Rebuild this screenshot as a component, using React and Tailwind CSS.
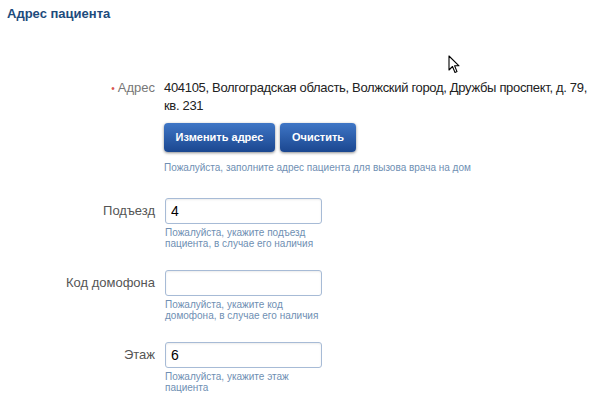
import React from 'react';

const font = { fontFamily: '"Liberation Sans", Arial, sans-serif' };

function Field({ label, value, hint }) {
  return (
    <div className="flex items-start">
      <div className="w-[155px] shrink-0 pt-[4px] text-right text-[13px] leading-[18px] text-[#555]">
        {label}
      </div>
      <div className="ml-[10px]">
        <input
          type="text"
          defaultValue={value}
          className="h-[26px] w-[157px] rounded-[3px] border border-[#a7bbd6] bg-white px-[5px] text-[14px] text-black outline-none shadow-[inset_0_1px_2px_rgba(0,0,0,0.08)]"
        />
        <div className="mt-[3px] w-[160px] text-[10px] leading-[11px] text-[#6f8fb3]">{hint}</div>
      </div>
    </div>
  );
}

export default function App() {
  return (
    <div className="relative h-[400px] w-[600px] overflow-hidden bg-white" style={font}>
      <h2 className="pl-[7px] pt-[6px] text-[13px] font-bold leading-[16px] text-[#1d4b7c]">Адрес пациента</h2>

      {/* Address */}
      <div className="mt-[57px] flex items-start">
        <div className="w-[155px] shrink-0 text-right text-[13px] leading-[18px] text-[#777]">
          <span className="mr-[3px] text-[10px] text-[#d9534f]">•</span>
          Адрес
        </div>
        <div className="ml-[9px]">
          <div className="w-[436px] text-[13px] leading-[18px] tracking-[-0.32px] text-[#222]">
            404105, Волгоградская область, Волжский город, Дружбы проспект, д. 79, кв. 231
          </div>
          <div className="mt-[8px] flex gap-[5px]">
            <button className="h-[29px] w-[111px] rounded-[4px] bg-gradient-to-b from-[#3f76c6] to-[#1b4790] text-[11px] font-bold text-white shadow-[0_1px_3px_rgba(0,0,0,0.45)]">
              Изменить адрес
            </button>
            <button className="h-[29px] w-[76px] rounded-[4px] bg-gradient-to-b from-[#3f76c6] to-[#1b4790] text-[11px] font-bold text-white shadow-[0_1px_3px_rgba(0,0,0,0.45)]">
              Очистить
            </button>
          </div>
          <div className="mt-[10px] text-[10px] leading-[12px] text-[#6f8fb3]">
            Пожалуйста, заполните адрес пациента для вызова врача на дом
          </div>
        </div>
      </div>

      <div className="mt-[24px] flex flex-col gap-[21px]">
        <Field label="Подъезд" value="4" hint="Пожалуйста, укажите подъезд пациента, в случае его наличия" />
        <Field label="Код домофона" value="" hint="Пожалуйста, укажите код домофона, в случае его наличия" />
        <Field label="Этаж" value="6" hint="Пожалуйста, укажите этаж пациента" />
      </div>

      {/* mouse cursor */}
      <svg className="absolute left-[448px] top-[55px]" width="12" height="19" viewBox="0 0 12 19">
        <path d="M1 1 L1 15 L4.5 11.5 L7 17.5 L9 16.6 L6.6 10.8 L11 10.8 Z" fill="#fff" stroke="#000" strokeWidth="1.1" strokeLinejoin="round" />
      </svg>
    </div>
  );
}
